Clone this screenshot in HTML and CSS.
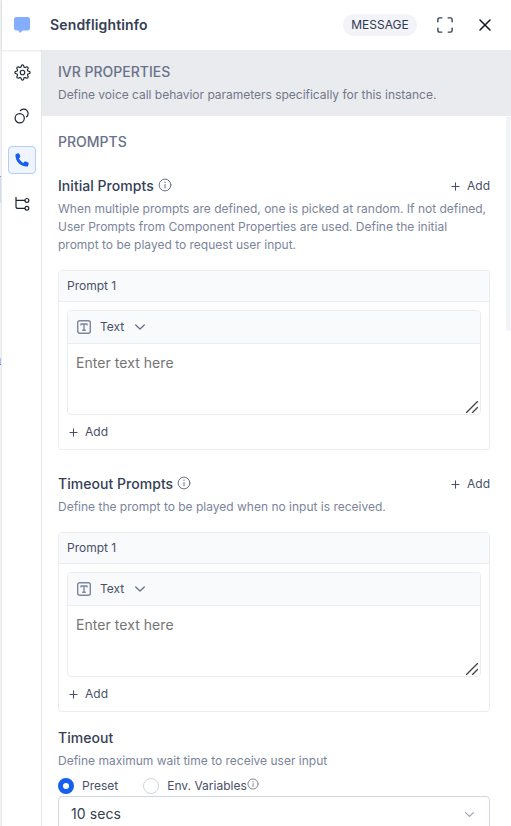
FILE: index.html
```html
<!DOCTYPE html>
<html lang="en">
<head>
<meta charset="utf-8">
<title>Sendflightinfo</title>
<link rel="stylesheet" href="styles.css">
</head>
<body>
<svg class="defs" width="0" height="0" aria-hidden="true">
  <symbol id="info" viewBox="0 0 14 14"><circle cx="7" cy="7" r="5.9"/><path d="M7 6.500v3.400M7 4v.6"/></symbol>
  <symbol id="plus" viewBox="0 0 10 10"><path d="M5 1v8M1 5h8"/></symbol>
  <symbol id="chevron" viewBox="0 0 12 12"><path d="M1.700 4 6 8 10.300 4"/></symbol>
  <symbol id="text" viewBox="0 0 14 14"><rect x=".7" y=".7" width="12.600" height="12.600" rx="2"/><path d="M4 4.900V4h6v.9M7 4v6.300M5.700 10.300h2.600"/></symbol>
  <symbol id="grip" viewBox="0 0 12 12"><path d="M.5 11.500 11.500.5M6.500 11.500l5-5"/></symbol>
</svg>
<div class="app">
  <div class="canvas"><span class="node"></span><span class="edge"></span></div>
  <div class="panel">
    <header class="header">
      <svg class="chat" width="16" height="16" viewBox="0 0 16 16"><path d="M2.500 0h11A2.500 2.500 0 0 1 16 2.500v8.500a2.500 2.500 0 0 1-2.500 2.500H9L5.500 16 4.500 13.500h-2A2.500 2.500 0 0 1 0 11V2.500A2.500 2.500 0 0 1 2.500 0z"/></svg>
      <h1>Sendflightinfo</h1>
      <span class="tag">MESSAGE</span>
      <svg class="expand" width="16" height="16" viewBox="0 0 16 16"><path d="M.9 4.800V2.500Q.9.9 2.500.9h2.300M11.200.9h2.300q1.600 0 1.600 1.600v2.300M15.100 11.200v2.300q0 1.600-1.600 1.600h-2.300M4.800 15.100H2.500Q.9 15.100.9 13.500v-2.300"/></svg>
      <svg class="close" width="12" height="12" viewBox="0 0 12 12"><path d="m1 1 10 10M11 1 1 11"/></svg>
    </header>
    <div class="body">
      <nav class="rail">
        <span class="tab"><svg width="17" height="17" viewBox="0 0 18 18"><path d="m7.400 3.300.5-1.800q1.100-1 2.200 0l.5 1.800 1.300.5 1.600-.9q1.600 0 1.600 1.600l-.9 1.600.5 1.300 1.800.5q1 1.100 0 2.200l-1.800.5-.5 1.300.9 1.600q0 1.600-1.600 1.600l-1.600-.9-1.300.5-.5 1.800q-1.100 1-2.200 0l-.5-1.800-1.300-.5-1.600.9q-1.600 0-1.600-1.600l.9-1.600-.5-1.300-1.800-.5q-1-1.100 0-2.200l1.800-.5.5-1.300-.9-1.600q0-1.600 1.600-1.600l1.600.9z"/><circle cx="9" cy="9" r="2.400"/></svg></span>
        <span class="tab"><svg width="16" height="16" viewBox="0 0 16 16"><circle cx="5.700" cy="10.200" r="4.600"/><path d="M6.300 2.700a4.400 4.400 0 1 1 6.300 6.100"/></svg></span>
        <span class="tab active"><svg width="14" height="14" viewBox="0 0 14 14"><path class="phone" d="M1.100.9 3 .2c.5-.2 1 .1 1.200.5l1 2.400c.2.500.1 1-.3 1.300l-1 .9c.8 1.900 2.300 3.500 4.500 4.600l1-1.100c.4-.4.800-.5 1.300-.3l2.500 1.100c.5.2.7.7.5 1.200l-.6 1.900c-.2.600-.6.900-1.200.9C5.400 13.600.4 8.600.4 2.100.4 1.500.6 1.100 1.100.9z"/></svg></span>
        <span class="tab"><svg width="15" height="14" viewBox="0 0 15 14"><path d="M1 0v9.400q0 2 2 2h6.800M1 3.400h8.800"/><circle cx="11.900" cy="3.400" r="1.900"/><circle cx="11.900" cy="11.200" r="1.900"/></svg></span>
      </nav>
      <main class="content">
        <section class="intro">
          <h2>IVR PROPERTIES</h2>
          <p>Define voice call behavior parameters specifically for this instance.</p>
        </section>
        <div class="form">
          <h2>PROMPTS</h2>
          <section class="group">
            <div class="title"><h3>Initial Prompts</h3><svg class="info"><use href="#info"/></svg><span class="add"><svg><use href="#plus"/></svg>Add</span></div>
            <p>When multiple prompts are defined, one is picked at random. If not defined, User Prompts from Component Properties are used. Define the initial prompt to be played to request user input.</p>
            <div class="card">
              <div class="card-head">Prompt 1</div>
              <div class="editor">
                <div class="type"><svg class="t"><use href="#text"/></svg><span>Text</span><svg class="chev"><use href="#chevron"/></svg></div>
                <div class="input">Enter text here<svg class="grip"><use href="#grip"/></svg></div>
              </div>
              <span class="add"><svg><use href="#plus"/></svg>Add</span>
            </div>
          </section>
          <section class="group">
            <div class="title"><h3>Timeout Prompts</h3><svg class="info"><use href="#info"/></svg><span class="add"><svg><use href="#plus"/></svg>Add</span></div>
            <p>Define the prompt to be played when no input is received.</p>
            <div class="card">
              <div class="card-head">Prompt 1</div>
              <div class="editor">
                <div class="type"><svg class="t"><use href="#text"/></svg><span>Text</span><svg class="chev"><use href="#chevron"/></svg></div>
                <div class="input">Enter text here<svg class="grip"><use href="#grip"/></svg></div>
              </div>
              <span class="add"><svg><use href="#plus"/></svg>Add</span>
            </div>
          </section>
          <section class="timeout">
            <h3>Timeout</h3>
            <p>Define maximum wait time to receive user input</p>
            <div class="radios">
              <span class="radio on"></span><span class="preset">Preset</span>
              <span class="radio"></span><span>Env. Variables</span><svg class="info small"><use href="#info"/></svg>
            </div>
            <div class="select"><span>10 secs</span><svg class="chev"><use href="#chevron"/></svg></div>
          </section>
        </div>
        <span class="scrollbar"></span>
      </main>
    </div>
  </div>
</div>
</body>
</html>
```
FILE: styles.css
```css
* { box-sizing: border-box; }
body { margin: 0; font: 12px/18px Inter, sans-serif; color: #475069; background: #fff; }
h1, h2, h3, p { margin: 0; }
svg { display: block; flex: none; fill: none; stroke: currentColor; stroke-linecap: round; stroke-linejoin: round; }
.defs { position: absolute; }
.app { display: flex; height: 826px; overflow: hidden; }
.canvas { position: relative; width: 2px; background: #f0f1f4; border-right: 1px solid #e8e9ec; flex: none; }
.node { position: absolute; left: 0; top: 176px; width: 1px; height: 27px; background: #cfdcf0; border-top: 1px solid #6d9aec; }
.edge { position: absolute; left: 0; top: 358px; width: 1px; height: 7px; background: #a9c4f2; border-bottom: 1px solid #4f86e8; }
.panel { flex: 1; min-width: 0; display: flex; flex-direction: column; }
.header { position: relative; height: 50px; flex: none; display: flex; align-items: center; padding: 0 20px 0 12px; box-shadow: 0 1px 2px #1018281a; background: #fff; }
.chat { fill: #84adff; stroke: none; }
h1 { flex: 1; margin-left: 20px; font-size: 14px; line-height: 20px; font-weight: 600; letter-spacing: .15px; color: #344054; }
.tag { width: 74px; height: 22px; border-radius: 11px; background: #f2f4f9; color: #30374f; text-align: center; line-height: 22px; }
.expand { margin-left: 20px; color: #344054; stroke-width: 1.400; }
.close { margin-left: 26px; color: #101828; stroke-width: 1.500; }
.body { flex: 1; display: flex; min-height: 0; }
.rail { width: 40px; flex: none; border-right: 1px solid #e6e7ea; padding: 8px 5px 0 6px; display: flex; flex-direction: column; gap: 16px; color: #1d2433; }
.tab { width: 28px; height: 28px; display: flex; align-items: center; justify-content: center; border-radius: 4px; stroke-width: 1.200; }
.tab.active { border: 1px solid #b2ccff; background: #eff4ff; }
.phone { fill: #155eef; stroke: none; }
.content { position: relative; flex: 1; min-width: 0; }
.intro { height: 66px; padding: 12px 16px; background: #eaebef; }
h2 { font-size: 14px; line-height: 20px; font-weight: 500; color: #697289; }
p { font-size: 12px; line-height: 18px; color: #7b849c; }
.intro h2 + p { margin-top: 4px; letter-spacing: -.02px; color: #71788a; }
.form { padding: 16px 21px 0 16px; }
.group { margin-bottom: 24px; }
.form > h2 + .group { margin-top: 24px; }
.title { display: flex; align-items: center; height: 20px; }
h3 { font-size: 14px; line-height: 20px; font-weight: 500; letter-spacing: .04px; color: #344054; }
.info { width: 14px; height: 14px; margin: -2px 0 0 4px; color: #697289; }
.add { display: flex; align-items: center; gap: 7px; color: #475069; }
.add svg { width: 9px; height: 9px; stroke-width: 1.200; }
.title .add { margin-left: auto; }
.title + p { margin-top: 4px; }
.card { margin-top: 16px; border: 1px solid #eaecf0; border-radius: 4px; overflow: hidden; }
.card-head { height: 31px; padding: 6px 8px; background: #f9fafc; border-bottom: 1px solid #eaecf0; }
.editor { margin: 8px 8px 0; border: 1px solid #eaecf0; border-radius: 4px; overflow: hidden; }
.type { height: 33px; padding: 0 9px; display: flex; align-items: center; background: #f9fafc; border-bottom: 1px solid #eaecf0; }
.type span { margin: 0 10px 0 9px; }
.t { width: 14px; height: 14px; color: #7d869e; stroke-width: 1.400; }
.chev { width: 12px; height: 12px; color: #667085; stroke-width: 1.300; }
.input { position: relative; height: 70px; padding: 9px 8px; font-size: 14px; line-height: 20px; letter-spacing: .05px; color: #757575; }
.grip { position: absolute; right: 2px; bottom: 1px; width: 12px; height: 12px; color: #444; stroke-width: 1.400; }
.card > .add { height: 34px; padding-left: 10px; }
.timeout { margin-top: -8px; }
.timeout h3 + p { margin-top: 4px; }
.radios { height: 18px; margin-top: 7px; display: flex; align-items: center; }
.radio { width: 16px; height: 16px; margin-right: 8px; border: 1px solid #d0d5dd; border-radius: 50%; flex: none; }
.radio.on { border: 5px solid #155eef; }
.preset { margin-right: 25px; }
.info.small { width: 12px; height: 12px; margin: -5px 0 0; }
.select { height: 36px; margin-top: 1px; padding: 0 14px 0 12px; display: flex; align-items: center; justify-content: space-between; border: 1px solid #d0d5e0; border-radius: 4px; font-size: 14px; letter-spacing: .1px; color: #344054; }
.select .chev { width: 11px; height: 11px; color: #98a2b3; }
.scrollbar { position: absolute; right: 0; top: 66px; width: 5px; height: 215px; border-radius: 4px; background: #f2f4f7; }
```
